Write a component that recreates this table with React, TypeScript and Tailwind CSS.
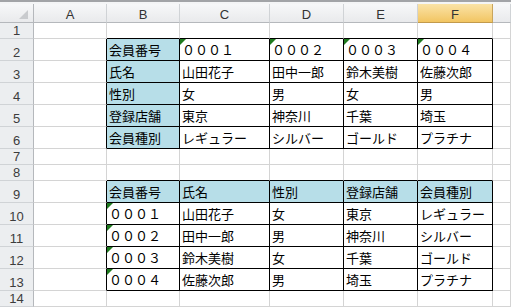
import React from "react";

// Column widths (including the 1px right gridline) and row heights (including the 1px bottom gridline)
const COLS = ["", "A", "B", "C", "D", "E", "F", ""];
const ROW_COUNT = 14;

type Cell = { text: string; flag?: boolean };

const sheet: Record<number, Record<number, Cell>> = {
  2: {
    2: { text: "会員番号" },
    3: { text: "０００１", flag: true },
    4: { text: "０００２", flag: true },
    5: { text: "０００３", flag: true },
    6: { text: "０００４", flag: true },
  },
  3: { 2: { text: "氏名" }, 3: { text: "山田花子" }, 4: { text: "田中一郎" }, 5: { text: "鈴木美樹" }, 6: { text: "佐藤次郎" } },
  4: { 2: { text: "性別" }, 3: { text: "女" }, 4: { text: "男" }, 5: { text: "女" }, 6: { text: "男" } },
  5: { 2: { text: "登録店舗" }, 3: { text: "東京" }, 4: { text: "神奈川" }, 5: { text: "千葉" }, 6: { text: "埼玉" } },
  6: { 2: { text: "会員種別" }, 3: { text: "レギュラー" }, 4: { text: "シルバー" }, 5: { text: "ゴールド" }, 6: { text: "プラチナ" } },
  9: { 2: { text: "会員番号" }, 3: { text: "氏名" }, 4: { text: "性別" }, 5: { text: "登録店舗" }, 6: { text: "会員種別" } },
  10: { 2: { text: "０００１", flag: true }, 3: { text: "山田花子" }, 4: { text: "女" }, 5: { text: "東京" }, 6: { text: "レギュラー" } },
  11: { 2: { text: "０００２", flag: true }, 3: { text: "田中一郎" }, 4: { text: "男" }, 5: { text: "神奈川" }, 6: { text: "シルバー" } },
  12: { 2: { text: "０００３", flag: true }, 3: { text: "鈴木美樹" }, 4: { text: "女" }, 5: { text: "千葉" }, 6: { text: "ゴールド" } },
  13: { 2: { text: "０００４", flag: true }, 3: { text: "佐藤次郎" }, 4: { text: "男" }, 5: { text: "埼玉" }, 6: { text: "プラチナ" } },
};

const inTable = (r: number, c: number) =>
  ((r >= 2 && r <= 6) || (r >= 9 && r <= 13)) && c >= 2 && c <= 6;

const isHeaderFill = (r: number, c: number) =>
  (r >= 2 && r <= 6 && c === 2) || (r === 9 && c >= 2 && c <= 6);

function ColumnHeader({ label, index }: { label: string; index: number }) {
  if (index === 0) {
    return (
      <div className="relative border-r border-b border-r-[#b5b8bc] border-b-[#b5b8bc] bg-gradient-to-b from-[#f7f8f9] to-[#e9eaec]">
        <div className="absolute right-[5px] bottom-[3px] h-0 w-0 border-l-[9px] border-t-[9px] border-l-transparent border-t-transparent border-b-0 border-r-[9px] border-r-[#c9cbce]" />
      </div>
    );
  }
  const selected = label === "F";
  return (
    <div
      className={
        selected
          ? "flex items-end justify-center border-r border-b border-r-[#c9a55c] border-b-[#c29a4c] bg-gradient-to-b from-[#fae3a6] to-[#f2c561] pb-[1px] text-[13px] leading-none text-[#333]"
          : "flex items-end justify-center border-r border-b border-r-[#d0d3d6] border-b-[#b5b8bc] bg-gradient-to-b from-[#f7f8f9] to-[#e9eaec] pb-[1px] text-[13px] leading-none text-[#333]"
      }
    >
      {label}
    </div>
  );
}

function RowHeader({ n }: { n: number }) {
  return (
    <div className="flex items-end justify-center border-r border-b border-r-[#b5b8bc] border-b-[#d0d3d6] bg-[#eceef0] pb-[1px] text-[13px] leading-none text-[#3c3c3c]">
      {n}
    </div>
  );
}

function DataCell({ r, c }: { r: number; c: number }) {
  const cell = sheet[r]?.[c];
  const rightBlack = inTable(r, c) || inTable(r, c + 1);
  const bottomBlack = inTable(r, c) || inTable(r + 1, c);
  const cls = [
    "relative flex items-end overflow-hidden whitespace-nowrap border-r border-b pl-[2px] pb-[4px] text-[13px] leading-none text-black",
    rightBlack ? "border-r-black" : "border-r-[#d4d4d4]",
    bottomBlack ? "border-b-black" : "border-b-[#d4d4d4]",
    isHeaderFill(r, c) ? "bg-[#b7dee8]" : "bg-white",
  ].join(" ");
  return (
    <div className={cls}>
      {cell?.flag && (
        <div className="absolute left-0 top-0 h-0 w-0 border-l-[6px] border-b-[6px] border-l-[#1f7a1f] border-b-transparent" />
      )}
      {cell?.text}
    </div>
  );
}

export default function App() {
  const rows = Array.from({ length: ROW_COUNT }, (_, i) => i + 1);
  return (
    <div
      className="h-[307px] w-[511px] overflow-hidden bg-white"
      style={{ fontFamily: '"Noto Sans CJK JP", "Noto Sans", sans-serif' }}
    >
      <div className="h-[4px] border-t-2 border-t-[#a2a4a7] bg-[#f4f5f6]" />
      <div className="grid grid-cols-[34px_73px_73px_90px_74px_74px_75px_1fr] grid-rows-[19px_16px_22px_22px_22px_22px_22px_16px_16px_22px_22px_22px_22px_22px_16px]">
        {COLS.map((label, i) => (
          <div key={`h${i}`} className="contents" style={{ fontFamily: '"Liberation Sans", Arial, sans-serif' }}>
            <ColumnHeader label={label} index={i} />
          </div>
        ))}
        {rows.map((r) => (
          <React.Fragment key={r}>
            <div className="contents" style={{ fontFamily: '"Liberation Sans", Arial, sans-serif' }}>
              <RowHeader n={r} />
            </div>
            {COLS.slice(1).map((_, k) => (
              <DataCell key={k} r={r} c={k + 1} />
            ))}
          </React.Fragment>
        ))}
      </div>
    </div>
  );
}
